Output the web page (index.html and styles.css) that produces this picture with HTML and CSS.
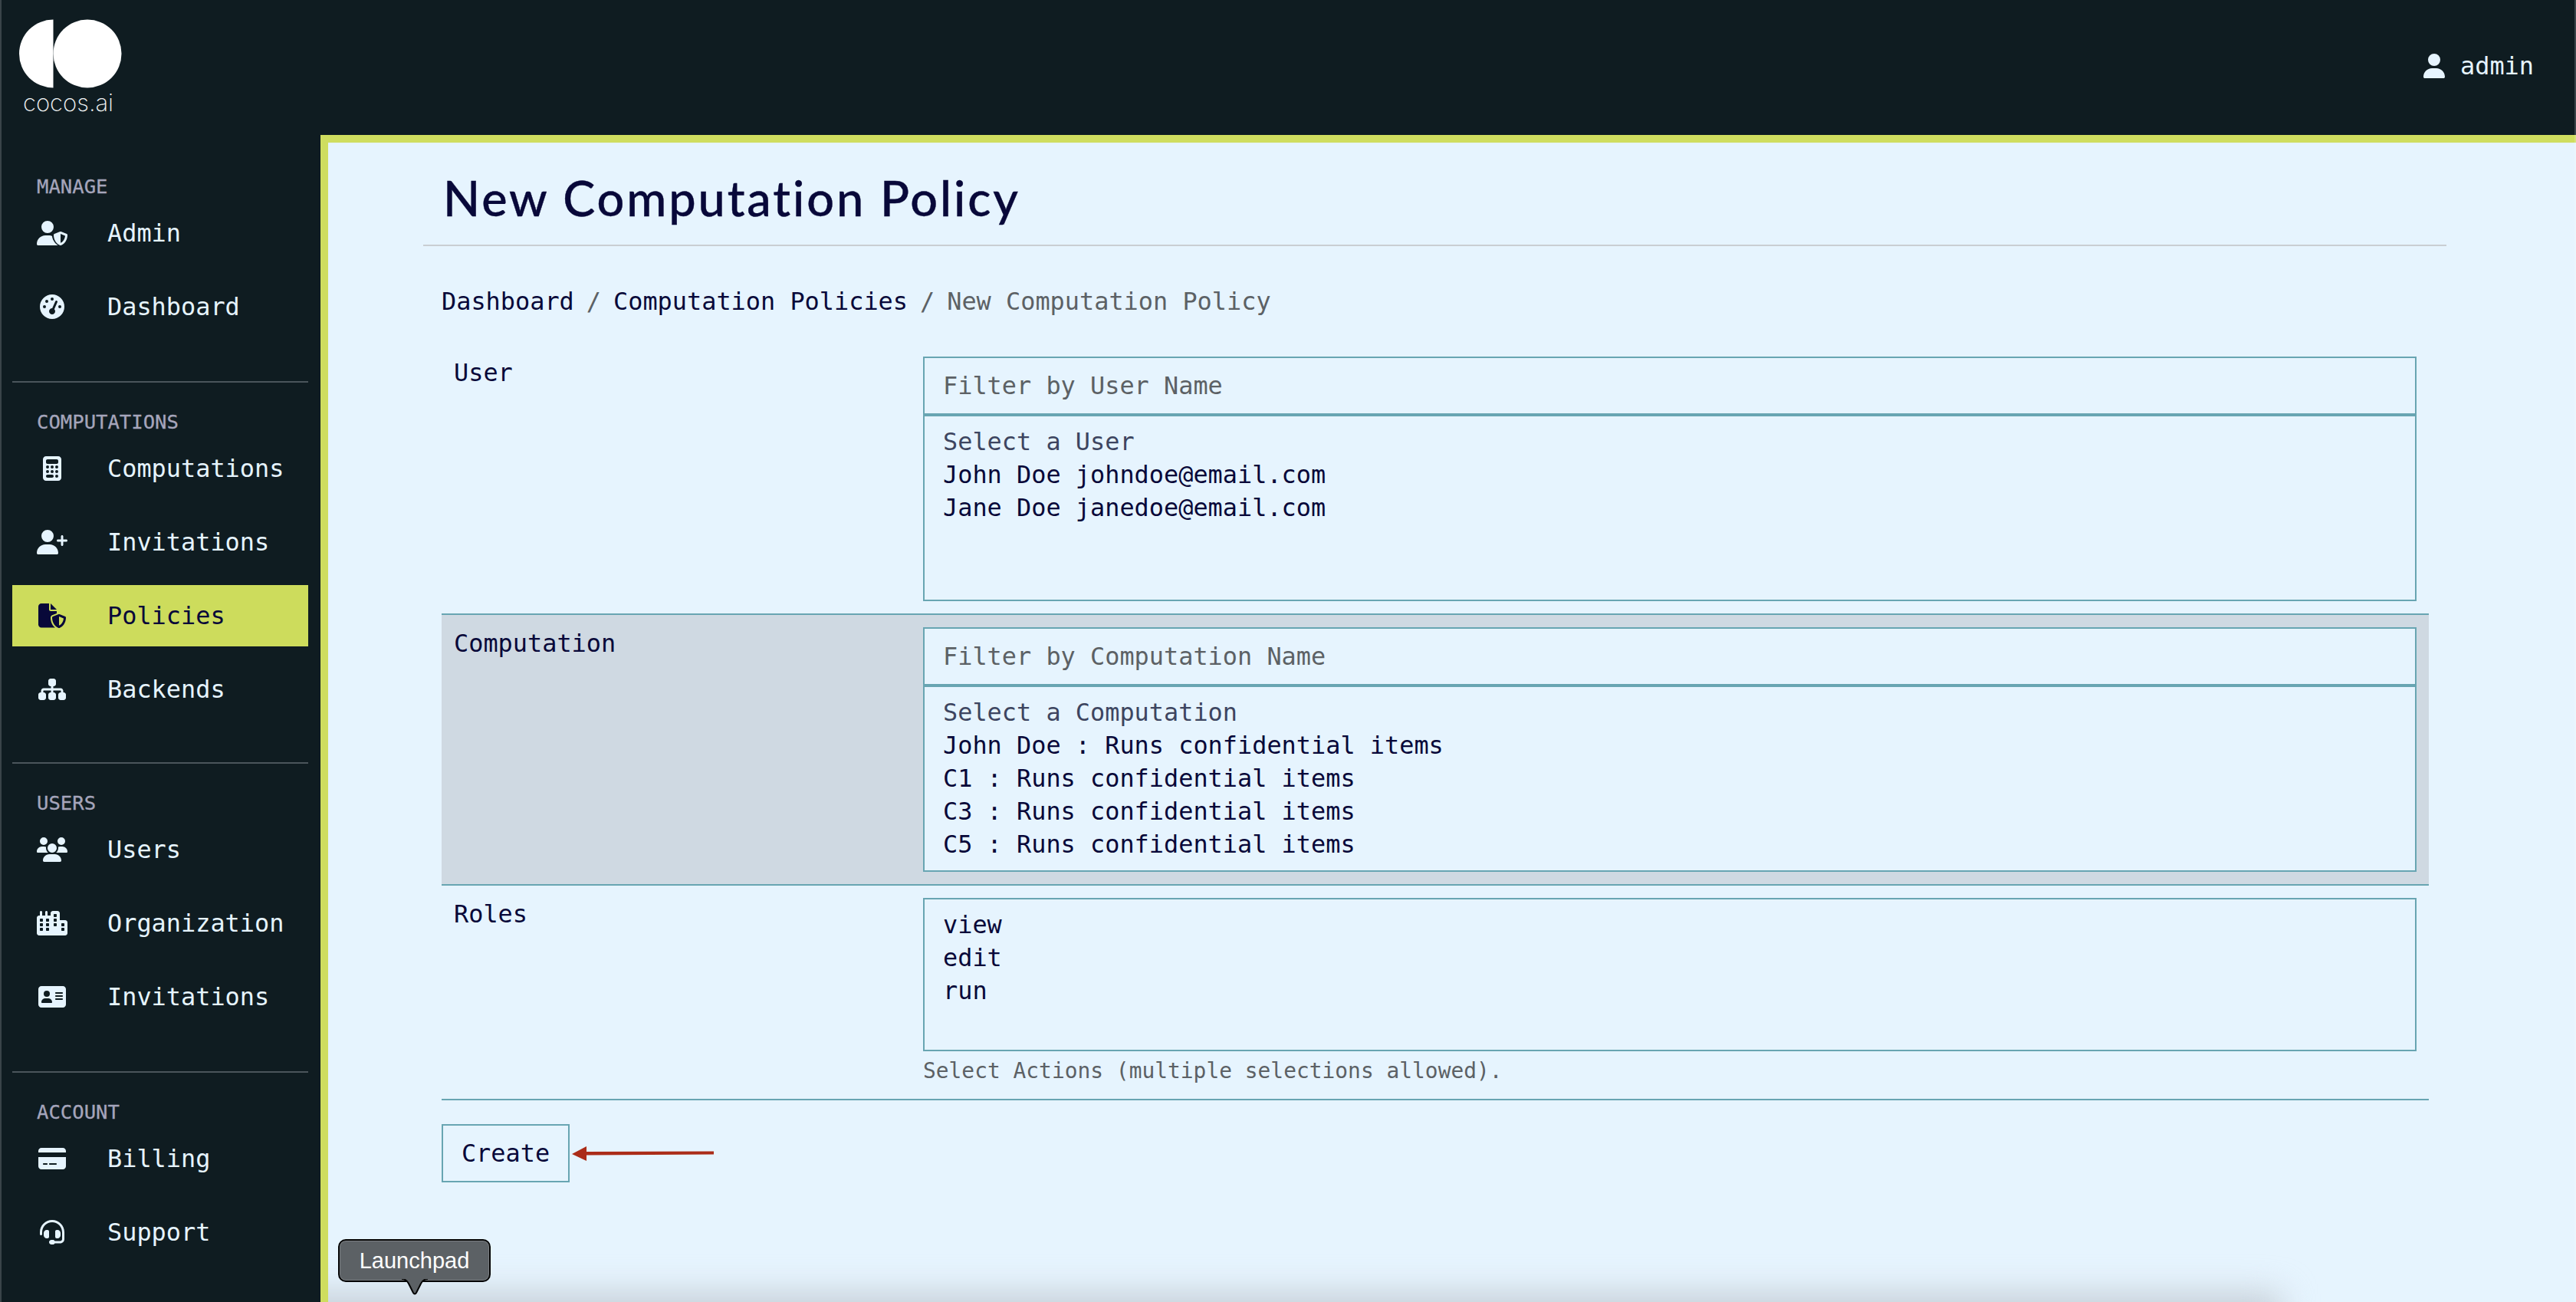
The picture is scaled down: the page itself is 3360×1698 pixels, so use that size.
FILE: index.html
```html
<!DOCTYPE html>
<html lang="en">
<head>
<meta charset="utf-8">
<title>New Computation Policy</title>
<link rel="stylesheet" href="styles.css">
</head>
<body>
<div class="page">
  <header class="topbar">
    <a class="logo">
      <svg class="logo-mark" width="134" height="90" viewBox="0 0 134 90"><path d="M44.5 0.5A44.5 44.5 0 0 0 44.5 89.5Z"/><circle cx="89" cy="45" r="44.5"/></svg>
      <span class="logo-text">cocos.ai</span>
    </a>
    <div class="account">
      <svg class="ico" width="28" height="32" viewBox="0 0 448 512"><path d="M224 256A128 128 0 1 0 224 0a128 128 0 1 0 0 256zm-45.700 48C79.800 304 0 383.800 0 482.300C0 498.700 13.300 512 29.700 512H418.300c16.400 0 29.700-13.300 29.700-29.700C448 383.800 368.200 304 269.700 304H178.300z"/></svg>
      <span>admin</span>
    </div>
  </header>
  <div class="body-row">
    <nav class="sidebar">
      <section class="group">
        <h2 class="group-title">MANAGE</h2>
        <a class="item"><span class="item-ico"><svg class="ico" width="40" height="32" viewBox="0 0 640 512"><path d="M224 256A128 128 0 1 0 224 0a128 128 0 1 0 0 256zm-45.700 48C79.800 304 0 383.800 0 482.300C0 498.700 13.300 512 29.700 512H440C372 462 322 380 320 318c-16-9-32-14-50.300-14H178.300z"/><path transform="translate(64)" fill-rule="evenodd" d="M423.100 225.700c5.700-2.300 12.100-2.300 17.800 0l120 48C570 277.400 576 286.200 576 296c0 63.300-25.900 168.800-134.800 214.200c-5.900 2.500-12.600 2.500-18.500 0C313.900 464.800 288 359.300 288 296c0-9.800 6-18.600 15.100-22.300l120-48zM527.400 312L432 273.800V461.700c68.200-33 91.500-99 95.400-149.700z"/></svg></span>Admin</a>
        <a class="item"><span class="item-ico"><svg class="ico" width="32" height="32" viewBox="0 0 512 512"><path d="M0 256a256 256 0 1 1 512 0A256 256 0 1 1 0 256zM288 96a32 32 0 1 0 -64 0 32 32 0 1 0 64 0zM256 416c35.300 0 64-28.700 64-64c0-17.400-6.900-33.100-18.100-44.600L366 161.700c5.300-12.100-.2-26.300-12.300-31.600s-26.300 .2-31.600 12.300L257.900 288c-.6 0-1.300 0-1.900 0c-35.300 0-64 28.700-64 64s28.700 64 64 64zM176 144a32 32 0 1 0 -64 0 32 32 0 1 0 64 0zM96 288a32 32 0 1 0 0-64 32 32 0 1 0 0 64zm352-32a32 32 0 1 0 -64 0 32 32 0 1 0 64 0z"/></svg></span>Dashboard</a>
      </section>
      <section class="group">
        <h2 class="group-title">COMPUTATIONS</h2>
        <a class="item"><span class="item-ico"><svg class="ico" width="24" height="32" viewBox="0 0 384 512"><path d="M64 0C28.700 0 0 28.700 0 64V448c0 35.300 28.700 64 64 64H320c35.300 0 64-28.700 64-64V64c0-35.300-28.700-64-64-64H64zM96 64H288c17.700 0 32 14.300 32 32v32c0 17.700-14.300 32-32 32H96c-17.700 0-32-14.300-32-32V96c0-17.700 14.300-32 32-32zm32 160a32 32 0 1 1 -64 0 32 32 0 1 1 64 0zM96 352a32 32 0 1 1 0-64 32 32 0 1 1 0 64zM64 416c0-17.700 14.300-32 32-32h96c17.700 0 32 14.300 32 32s-14.300 32-32 32H96c-17.700 0-32-14.300-32-32zM192 256a32 32 0 1 1 0-64 32 32 0 1 1 0 64zm32 64a32 32 0 1 1 -64 0 32 32 0 1 1 64 0zm64-64a32 32 0 1 1 0-64 32 32 0 1 1 0 64zm32 64a32 32 0 1 1 -64 0 32 32 0 1 1 64 0zM288 448a32 32 0 1 1 0-64 32 32 0 1 1 0 64z"/></svg></span>Computations</a>
        <a class="item"><span class="item-ico"><svg class="ico" width="40" height="32" viewBox="0 0 640 512"><path d="M96 128a128 128 0 1 1 256 0A128 128 0 1 1 96 128zM0 482.300C0 383.800 79.800 304 178.300 304h91.400C368.200 304 448 383.800 448 482.300c0 16.400-13.300 29.700-29.700 29.700H29.700C13.300 512 0 498.700 0 482.300zM504 312V248H440c-13.300 0-24-10.700-24-24s10.700-24 24-24h64V136c0-13.300 10.700-24 24-24s24 10.700 24 24v64h64c13.300 0 24 10.700 24 24s-10.700 24-24 24H552v64c0 13.300-10.700 24-24 24s-24-10.700-24-24z"/></svg></span>Invitations</a>
        <a class="item active"><span class="item-ico"><svg class="ico" width="36" height="32" viewBox="0 0 576 512"><path fill-rule="evenodd" d="M0 64C0 28.700 28.700 0 64 0H224V128c0 17.700 14.300 32 32 32H384v47l-92.800 37.100c-21.300 8.500-35.200 29.100-35.200 52c0 56.600 18.900 148 94.200 208H64c-35.300 0-64-28.700-64-64V64zm384 64H256V0L384 128zm39.100 97.700c5.700-2.300 12.100-2.300 17.800 0l120 48C570 277.400 576 286.200 576 296c0 63.300-25.900 168.800-134.800 214.200c-5.900 2.500-12.600 2.500-18.500 0C313.900 464.800 288 359.300 288 296c0-9.800 6-18.600 15.100-22.300l120-48zM527.400 312L432 273.800V461.700c68.200-33 91.500-99 95.400-149.700z"/></svg></span>Policies</a>
        <a class="item"><span class="item-ico"><svg class="ico" width="36" height="32" viewBox="0 0 576 512"><path d="M208 80c0-26.500 21.500-48 48-48h64c26.500 0 48 21.500 48 48v64c0 26.500-21.500 48-48 48h-8v40H464c30.900 0 56 25.100 56 56v32h8c26.500 0 48 21.500 48 48v64c0 26.500-21.500 48-48 48H464c-26.500 0-48-21.500-48-48V368c0-26.500 21.500-48 48-48h8V288c0-4.400-3.600-8-8-8H312v40h8c26.500 0 48 21.500 48 48v64c0 26.500-21.500 48-48 48H256c-26.500 0-48-21.500-48-48V368c0-26.500 21.500-48 48-48h8V280H112c-4.400 0-8 3.600-8 8v32h8c26.500 0 48 21.500 48 48v64c0 26.500-21.500 48-48 48H48c-26.500 0-48-21.500-48-48V368c0-26.500 21.500-48 48-48h8V288c0-30.900 25.100-56 56-56H264V192h-8c-26.500 0-48-21.500-48-48V80z"/></svg></span>Backends</a>
      </section>
      <section class="group">
        <h2 class="group-title">USERS</h2>
        <a class="item"><span class="item-ico"><svg class="ico" width="40" height="32" viewBox="0 0 640 512"><path d="M144 0a80 80 0 1 1 0 160A80 80 0 1 1 144 0zM512 0a80 80 0 1 1 0 160A80 80 0 1 1 512 0zM0 298.700C0 239.800 47.800 192 106.700 192h42.700c15.900 0 31 3.500 44.600 9.700c-1.300 7.200-1.900 14.700-1.900 22.300c0 38.200 16.800 72.500 43.300 96c-.2 0-.4 0-.7 0H21.300C9.600 320 0 310.400 0 298.700zM405.300 320c-.2 0-.4 0-.7 0c26.600-23.500 43.300-57.800 43.300-96c0-7.600-.7-15-1.900-22.300c13.600-6.300 28.700-9.700 44.600-9.700h42.700C592.200 192 640 239.800 640 298.700c0 11.800-9.600 21.300-21.300 21.300H405.300zM224 224a96 96 0 1 1 192 0 96 96 0 1 1 -192 0zM128 485.300C128 411.700 187.700 352 261.300 352H378.700C452.300 352 512 411.700 512 485.300c0 14.700-11.900 26.700-26.700 26.700H154.700c-14.700 0-26.700-11.900-26.700-26.700z"/></svg></span>Users</a>
        <a class="item"><span class="item-ico"><svg class="ico" width="40" height="32" viewBox="0 0 640 512"><path fill-rule="evenodd" d="M480 48c0-26.500-21.500-48-48-48H336c-26.500 0-48 21.500-48 48V96H224V24c0-13.300-10.700-24-24-24s-24 10.700-24 24V96H112V24c0-13.300-10.700-24-24-24S64 10.700 64 24V96H48C21.500 96 0 117.500 0 144V464c0 26.500 21.500 48 48 48H592c26.500 0 48-21.500 48-48V240c0-26.500-21.500-48-48-48H480V48zM368 64h32c8.800 0 16 7.200 16 16v32c0 8.800-7.200 16-16 16H368c-8.800 0-16-7.200-16-16V80c0-8.800 7.200-16 16-16zM368 160h32c8.800 0 16 7.200 16 16v32c0 8.800-7.200 16-16 16H368c-8.800 0-16-7.200-16-16V176c0-8.800 7.200-16 16-16zM368 256h32c8.800 0 16 7.200 16 16v32c0 8.800-7.200 16-16 16H368c-8.800 0-16-7.200-16-16V272c0-8.800 7.200-16 16-16zM528 256h32c8.800 0 16 7.200 16 16v32c0 8.800-7.200 16-16 16H528c-8.800 0-16-7.200-16-16V272c0-8.800 7.200-16 16-16zM528 352h32c8.800 0 16 7.200 16 16v32c0 8.800-7.200 16-16 16H528c-8.800 0-16-7.200-16-16V368c0-8.800 7.200-16 16-16zM80 160h32c8.800 0 16 7.200 16 16v32c0 8.800-7.200 16-16 16H80c-8.800 0-16-7.200-16-16V176c0-8.800 7.200-16 16-16zM208 160h32c8.800 0 16 7.200 16 16v32c0 8.800-7.200 16-16 16H208c-8.800 0-16-7.200-16-16V176c0-8.800 7.200-16 16-16zM80 256h32c8.800 0 16 7.200 16 16v32c0 8.800-7.200 16-16 16H80c-8.800 0-16-7.200-16-16V272c0-8.800 7.200-16 16-16zM208 256h32c8.800 0 16 7.200 16 16v32c0 8.800-7.200 16-16 16H208c-8.800 0-16-7.200-16-16V272c0-8.800 7.200-16 16-16zM80 352h32c8.800 0 16 7.200 16 16v32c0 8.800-7.200 16-16 16H80c-8.800 0-16-7.200-16-16V368c0-8.800 7.200-16 16-16zM208 352h32c8.800 0 16 7.200 16 16v32c0 8.800-7.200 16-16 16H208c-8.800 0-16-7.200-16-16V368c0-8.800 7.200-16 16-16z"/></svg></span>Organization</a>
        <a class="item"><span class="item-ico"><svg class="ico" width="36" height="32" viewBox="0 0 576 512"><path d="M64 32C28.700 32 0 60.700 0 96V416c0 35.300 28.700 64 64 64H512c35.300 0 64-28.700 64-64V96c0-35.300-28.700-64-64-64H64zm80 256h64c44.200 0 80 35.800 80 80c0 8.800-7.200 16-16 16H80c-8.800 0-16-7.200-16-16c0-44.200 35.800-80 80-80zm-32-96a64 64 0 1 1 128 0 64 64 0 1 1 -128 0zm256-32H496c8.800 0 16 7.200 16 16s-7.200 16-16 16H368c-8.800 0-16-7.200-16-16s7.200-16 16-16zm0 64H496c8.800 0 16 7.200 16 16s-7.200 16-16 16H368c-8.800 0-16-7.200-16-16s7.200-16 16-16zm0 64H496c8.800 0 16 7.200 16 16s-7.200 16-16 16H368c-8.800 0-16-7.200-16-16s7.200-16 16-16z"/></svg></span>Invitations</a>
      </section>
      <section class="group">
        <h2 class="group-title">ACCOUNT</h2>
        <a class="item"><span class="item-ico"><svg class="ico" width="36" height="32" viewBox="0 0 576 512"><path d="M64 32C28.700 32 0 60.700 0 96v32H576V96c0-35.300-28.700-64-64-64H64zM576 224H0V416c0 35.300 28.700 64 64 64H512c35.300 0 64-28.700 64-64V224zM112 352h64c8.800 0 16 7.200 16 16s-7.200 16-16 16H112c-8.800 0-16-7.200-16-16s7.200-16 16-16zm112 16c0-8.800 7.200-16 16-16H368c8.800 0 16 7.200 16 16s-7.200 16-16 16H240c-8.800 0-16-7.200-16-16z"/></svg></span>Billing</a>
        <a class="item"><span class="item-ico"><svg class="ico" width="32" height="32" viewBox="0 0 512 512"><path d="M256 48C141.100 48 48 141.100 48 256v40c0 13.300-10.700 24-24 24s-24-10.700-24-24V256C0 114.600 114.600 0 256 0S512 114.600 512 256V400.100c0 48.600-39.400 88-88.100 88L313.600 488c-8.300 14.300-23.800 24-41.600 24H240c-26.500 0-48-21.500-48-48s21.500-48 48-48h32c17.800 0 33.300 9.700 41.600 24l110.400 .1c22.100 0 40-17.900 40-40V256c0-114.900-93.100-208-208-208zM144 208h16c17.700 0 32 14.300 32 32V352c0 17.700-14.300 32-32 32H144c-35.300 0-64-28.700-64-64V272c0-35.300 28.700-64 64-64zm224 0c35.300 0 64 28.700 64 64v48c0 35.300-28.700 64-64 64H352c-17.700 0-32-14.300-32-32V240c0-17.700 14.300-32 32-32h16z"/></svg></span>Support</a>
      </section>
    </nav>
    <main class="main">
      <div class="content">
        <h1 class="title">New Computation Policy</h1>
        <ol class="crumbs">
          <li><a>Dashboard</a></li>
          <li class="sep">/</li>
          <li><a>Computation Policies</a></li>
          <li class="sep">/</li>
          <li class="current">New Computation Policy</li>
        </ol>
        <form class="form">
          <div class="row">
            <label class="row-label">User</label>
            <div class="field">
              <div class="filter">Filter by User Name</div>
              <div class="list">
                <div class="opt-head">Select a User</div>
                <div>John Doe johndoe@email.com</div>
                <div>Jane Doe janedoe@email.com</div>
              </div>
            </div>
          </div>
          <div class="row row-hover">
            <label class="row-label">Computation</label>
            <div class="field">
              <div class="filter">Filter by Computation Name</div>
              <div class="list">
                <div class="opt-head">Select a Computation</div>
                <div>John Doe : Runs confidential items</div>
                <div>C1 : Runs confidential items</div>
                <div>C3 : Runs confidential items</div>
                <div>C5 : Runs confidential items</div>
              </div>
            </div>
          </div>
          <div class="row row-last">
            <label class="row-label">Roles</label>
            <div class="field">
              <div class="list list-roles">
                <div>view</div>
                <div>edit</div>
                <div>run</div>
              </div>
              <p class="help">Select Actions (multiple selections allowed).</p>
            </div>
          </div>
          <div class="actions">
            <button class="btn" type="button">Create</button>
            <svg class="arrow" width="186" height="24" viewBox="0 0 186 24"><path d="M0 13L19 3V10L185 9.500V13.500L19 14.500V22Z"/></svg>
          </div>
        </form>
      </div>
      <div class="dock-shadow"></div>
      <div class="tooltip">Launchpad
        <svg class="tooltip-tip" width="36" height="22" viewBox="0 0 36 22"><path d="M1 0C6 0 8 2 10 6L16 18Q18 21 20 18L26 6C28 2 30 0 35 0"/></svg>
      </div>
    </main>
  </div>
</div>
</body>
</html>
```

FILE: styles.css
```css
* { box-sizing: border-box; }
html, body { margin: 0; padding: 0; height: 100%; }
body {
  background: #0f1c21;
  color: #080839;
  font-family: "DejaVu Sans Mono", "Liberation Mono", monospace;
  font-size: 31.9px;
  overflow: hidden;
}
.page {
  position: relative;
  width: 3360px;
  height: 1698px;
  overflow: hidden;
  display: flex;
  flex-direction: column;
}
.page::before, .page::after {
  content: "";
  position: absolute;
  top: 0;
  bottom: 0;
  width: 2px;
  background: rgba(255, 255, 255, 0.18);
  z-index: 5;
}
.page::before { left: 0; }
.page::after { right: 0; }

.topbar {
  height: 176px;
  flex: none;
  display: flex;
  justify-content: space-between;
  align-items: center;
  padding: 0 55px 4px 25px;
  color: #e6f4fe;
}
.logo { display: flex; flex-direction: column; align-self: flex-start; padding-top: 25px; }
.logo-mark { fill: #fff; display: block; }
.logo-text {
  font-family: Inter, "Noto Sans", sans-serif;
  font-weight: 200;
  font-size: 31px;
  line-height: 38px;
  color: #f0f3f4;
  padding-left: 5px;
}
.account { display: flex; align-items: center; gap: 20px; }
.ico { fill: currentColor; display: block; flex: none; }

.body-row { flex: 1; display: flex; min-height: 0; }

.sidebar { width: 418px; flex: none; padding-top: 14px; }
.group { position: relative; padding: 2px 16px 55px; }
.group:first-child, .group:nth-child(3) { padding-bottom: 57px; }
.group + .group::before {
  content: "";
  position: absolute;
  left: 16px;
  right: 16px;
  top: 0;
  height: 2px;
  background: #4a555b;
}
.group-title {
  margin: 0;
  padding: 31px 0 0 32px;
  height: 72px;
  line-height: 40px;
  font-size: 25.6px;
  font-weight: 400;
  color: #a5a5bb;
  -webkit-text-stroke: 0.3px #a5a5bb;
}
.item {
  display: flex;
  align-items: center;
  height: 80px;
  padding-left: 32px;
  color: #e6f4fe;
  margin-bottom: 16px;
}
.item:last-child { margin-bottom: 0; }
.item-ico { width: 40px; margin-right: 52px; display: flex; justify-content: center; }
.item.active { background: #cddc5c; color: #080839; }

.main {
  flex: 1;
  position: relative;
  background: #e6f4fe;
  border-top: 10px solid #cfdd5f;
  border-left: 10px solid #cfdd5f;
  overflow: hidden;
  min-width: 0;
}
.content { margin: 0 169px 0 124px; position: relative; z-index: 1; }
.title {
  margin: 0;
  padding: 32px 0 21px 26px;
  border-bottom: 2px solid #c9ced2;
  font-family: Lato, "Noto Sans", sans-serif;
  font-weight: 500;
  font-size: 63px;
  line-height: 80px;
  letter-spacing: 2.9px;
  -webkit-text-stroke: 0.4px #080839;
}
.crumbs {
  list-style: none;
  margin: 0;
  padding: 51px 0 0 24px;
  display: flex;
  gap: 16px;
  line-height: 43px;
  height: 128px;
}
.sep, .current { color: #5c6165; }

.form { margin: 0 23px 0 24px; }
.row {
  display: grid;
  grid-template-columns: 612px 1fr;
  padding: 16px;
}
.row-hover {
  background: #cfd9e2;
  border-top: 2px solid #68a5b2;
  border-bottom: 2px solid #68a5b2;
}
.row-last { border-bottom: 2px solid #68a5b2; padding-bottom: 17px; }
.row-label { line-height: 43px; }
.filter {
  height: 76px;
  border: 2px solid #68a5b2;
  background: #e6f4fe;
  padding: 0 24px;
  line-height: 72px;
  color: #5c6165;
}
.list {
  height: 243px;
  border: 2px solid #68a5b2;
  background: #e6f4fe;
  padding: 12px 24px;
  line-height: 43px;
}
.list-roles { height: 200px; }
.opt-head { color: #3d4560; }
.help {
  margin: 7px 0 0;
  font-size: 27.9px;
  line-height: 38px;
  color: #5c6165;
}
.actions { display: flex; align-items: center; gap: 3px; margin-top: 31px; }
.btn {
  height: 76px;
  width: 167px;
  border: 2px solid #68a5b2;
  background: #e6f4fe;
  color: #080839;
  font: inherit;
  padding: 0;
}
.arrow { fill: #ab2c18; display: block; }

.dock-shadow {
  position: absolute;
  left: -60px;
  right: 385px;
  bottom: -70px;
  height: 80px;
  background: #c4ccd4;
  filter: blur(22px);
}
.tooltip {
  position: absolute;
  z-index: 3;
  left: 13px;
  bottom: 26px;
  width: 199px;
  height: 56px;
  border: 2px solid #050505;
  border-radius: 10px;
  background: #5c6165;
  box-shadow: inset 0 0 0 1px #7a7e82;
  color: #fff;
  font-family: "Liberation Sans", Arial, sans-serif;
  font-size: 29px;
  line-height: 52px;
  text-align: center;
}
.tooltip-tip {
  position: absolute;
  left: 50%;
  top: 50px;
  margin-left: -18px;
  fill: #5c6165;
  stroke: #050505;
  stroke-width: 2;
}
```
